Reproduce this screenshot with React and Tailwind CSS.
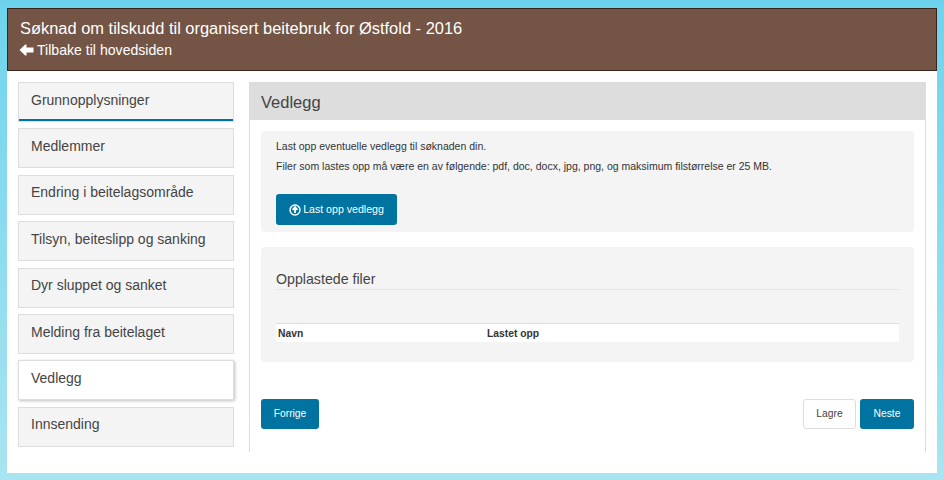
import React from "react";

const steps = [
  { label: "Grunnopplysninger", state: "done" },
  { label: "Medlemmer" },
  { label: "Endring i beitelagsområde" },
  { label: "Tilsyn, beiteslipp og sanking" },
  { label: "Dyr sluppet og sanket" },
  { label: "Melding fra beitelaget" },
  { label: "Vedlegg", state: "active" },
  { label: "Innsending" },
];

function stepClass(state) {
  if (state === "active") return "bg-white shadow-[1px_1px_3px_rgba(0,0,0,0.25)]";
  if (state === "done") return "bg-[#f4f4f4] shadow-[inset_0_-2px_0_#0073a0]";
  return "bg-[#f4f4f4]";
}

export default function App() {
  return (
    <div className="h-[480px] w-[944px] overflow-hidden bg-gradient-to-b from-[#6dd3ec] to-[#a9e4f1] px-[7px] pt-2 font-['Liberation_Sans',Arial,sans-serif] text-[#333]">
      <div className="h-[465px] w-[930px] bg-white">
        {/* Header */}
        <header className="h-[63px] border border-[#3a2419] bg-[#745444] pl-3 pt-[9px] text-white">
          <h1 className="text-[16.45px] leading-5">Søknad om tilskudd til organisert beitebruk for Østfold - 2016</h1>
          <a className="mt-[2px] flex items-center text-[14.1px] leading-5">
            <svg width="15" height="12" viewBox="0 0 15 12" className="mr-[3px] -ml-[1px]" fill="white">
              <path d="M0.5 6 6.2 0.5 7.5 0.5 7.5 3.5 14.5 3.5 14.5 8.5 7.5 8.5 7.5 11.5 6.2 11.5Z" />
            </svg>
            <span>Tilbake til hovedsiden</span>
          </a>
        </header>

        <div className="flex pl-[11px] pt-[11px]">
          {/* Steps */}
          <nav className="flex w-[216px] flex-col gap-[6.4px]">
            {steps.map((step) => (
              <div
                key={step.label}
                className={`h-10 border border-[#ddd] pl-3 pt-[7.6px] text-sm leading-[18px] text-[#444] ${stepClass(step.state)}`}
              >
                {step.label}
              </div>
            ))}
          </nav>

          {/* Panel */}
          <main className="ml-[15px] h-[370px] w-[677px] border-x border-[#ddd]">
            <div className="flex h-[38px] items-center bg-[#ddd] pl-[11px] pt-[2px] text-[16.5px] text-[#444]">Vedlegg</div>

            <section className="ml-[11px] mt-[11px] h-[101px] w-[653px] rounded bg-[#f4f4f4] pl-[15px] pt-[8px] text-[10.5px] leading-[15px]">
              <p>Last opp eventuelle vedlegg til søknaden din.</p>
              <p className="mt-[5px]">Filer som lastes opp må være en av følgende: pdf, doc, docx, jpg, png, og maksimum filstørrelse er 25 MB.</p>
              <button className="mt-[20px] flex h-[31px] w-[121px] items-center justify-center gap-[2px] rounded-[3px] bg-[#0073a0] text-[10.6px] text-white">
                <svg width="12" height="12" viewBox="0 0 12 12" fill="none">
                  <circle cx="6" cy="6" r="5" stroke="white" strokeWidth="1.4" />
                  <path d="M6 9V3.4M3.6 5.8 6 3.2l2.4 2.6" stroke="white" strokeWidth="1.8" />
                </svg>
                Last opp vedlegg
              </button>
            </section>

            <section className="ml-[11px] mt-[15px] h-[115px] w-[653px] rounded bg-[#f4f4f4] px-[15px] pt-[24px]">
              <h2 className="border-b border-[#e4e4e4] pb-[1px] text-[14.2px] leading-[17px] text-[#444]">Opplastede filer</h2>
              <div className="mt-[33px] flex h-[19px] items-center border-t border-[#ddd] bg-white pl-[2px] pt-[1px] text-[10.3px] font-bold">
                <span className="w-[209px]">Navn</span>
                <span>Lastet opp</span>
              </div>
            </section>

            <div className="mx-[11px] mt-[37px] flex items-center text-[10.3px]">
              <button className="h-[30px] w-[58px] rounded-[3px] bg-[#0073a0] text-white">Forrige</button>
              <button className="ml-auto h-[30px] w-[53px] rounded-[3px] border border-[#ddd] bg-white text-[#444]">Lagre</button>
              <button className="ml-1 h-[30px] w-[54px] rounded-[3px] bg-[#0073a0] text-white">Neste</button>
            </div>
          </main>
        </div>
      </div>
    </div>
  );
}
